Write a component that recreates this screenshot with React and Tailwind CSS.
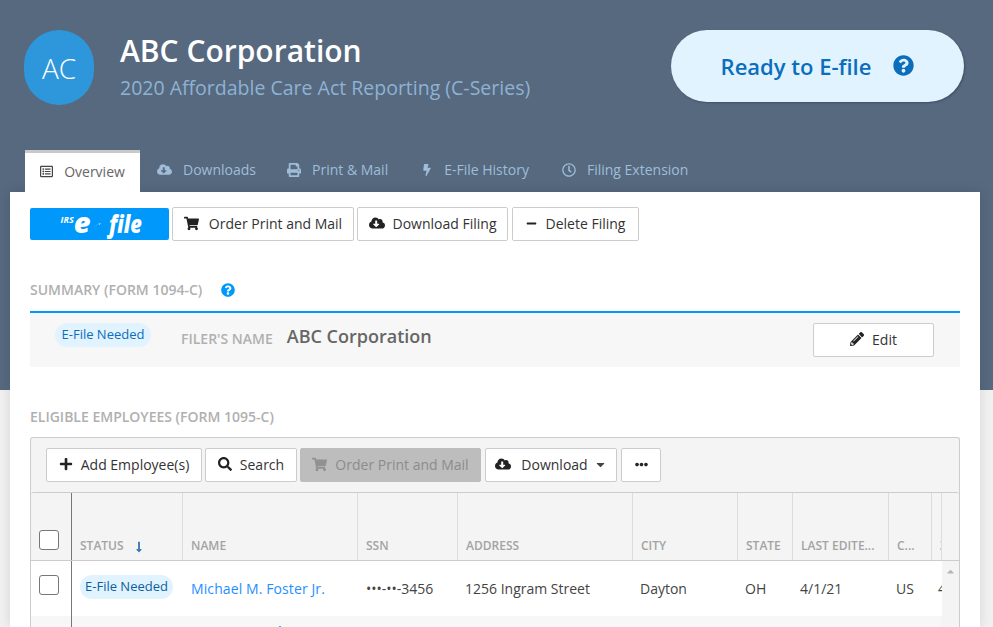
import React from "react";
import {
  FaRegListAlt, FaCloudDownloadAlt, FaPrint, FaBolt, FaRegClock, FaQuestionCircle,
  FaShoppingCart, FaMinus, FaPencilAlt, FaPlus, FaSearch, FaCaretDown, FaEllipsisH,
  FaLongArrowAltDown, FaCaretUp,
} from "react-icons/fa";

function Btn({ icon, children, className = "" }) {
  return (
    <button className={"h-[34px] pb-[2px] flex items-center justify-center gap-[8px] bg-white border border-[#cccccc] rounded-[2px] text-[14px] text-[#333333] whitespace-nowrap " + className}>
      {icon}
      {children}
    </button>
  );
}

function Tab({ icon, label, className = "" }) {
  return (
    <div className={"flex items-center gap-[11px] text-[14px] text-[#9fbdd9] pb-[3px] " + className}>
      {icon}
      <span>{label}</span>
    </div>
  );
}

function Th({ w, children, className = "" }) {
  return (
    <div className={"shrink-0 h-full flex items-end pb-[5px] pl-[8px] border-r border-[#dddddd] text-[12px] font-semibold text-[#a3a3a3] whitespace-nowrap overflow-hidden " + w + " " + className}>
      {children}
    </div>
  );
}

function Td({ w, children, className = "" }) {
  return (
    <div className={"shrink-0 pl-[7px] pb-[1px] text-[14px] text-[#444444] whitespace-nowrap overflow-hidden " + w + " " + className}>
      {children}
    </div>
  );
}

export default function App() {
  return (
    <div className="relative h-[627px] w-[993px] overflow-hidden bg-[linear-gradient(#56697f_390px,#f1f1f1_390px)] font-['Open_Sans',sans-serif]">
      <header className="flex h-[150px] items-start pl-[24px] pr-[29px] pt-[30px]">
        <div className="flex h-[75px] w-[70px] shrink-0 items-center justify-center rounded-full bg-[#2e97dc] text-[28px] font-light text-white">AC</div>
        <div className="ml-[26px] flex-1">
          <h1 className="text-[30px] font-semibold leading-[40px] mt-[1px] text-white">ABC Corporation</h1>
          <p className="text-[19.5px] leading-[30px] text-[#8fb2d4] mt-[2px]">2020 Affordable Care Act Reporting (C-Series)</p>
        </div>
        <div className="flex h-[72px] w-[293px] items-center justify-center gap-[22px] rounded-full bg-[#e1f3ff] text-[22px] font-semibold text-[#0a6ebd] shadow-[1px_1px_2px_rgba(0,0,0,0.25)]">
          <span className="mt-[1px]">Ready to E-file</span>
          <FaQuestionCircle className="text-[#0a6ebd] text-[21px] -mt-[2px]" />
        </div>
      </header>

      <nav className="flex h-[42px] items-center pl-[25px]">
        <div className="flex h-[42px] w-[115px] items-center justify-center gap-[11px] border-t-[3px] border-[#c9c9c9] bg-white pb-[2px] text-[14px] text-[#666666]">
          <FaRegListAlt className="text-[13px] text-[#444444]" />
          <span>Overview</span>
        </div>
        <Tab className="ml-[17px] gap-[10px]" icon={<FaCloudDownloadAlt className="text-[15px]" />} label="Downloads" />
        <Tab className="ml-[31px]" icon={<FaPrint className="text-[14px]" />} label="Print & Mail" />
        <Tab className="ml-[33px]" icon={<FaBolt className="text-[12px]" />} label="E-File History" />
        <Tab className="ml-[33px]" icon={<FaRegClock className="text-[14px]" />} label="Filing Extension" />
      </nav>

      <main className="mx-[10px] h-[435px] w-[970px] bg-white px-[20px] pt-[15px] shadow-[0_0_12px_rgba(0,0,0,0.12)]">
        <div className="flex items-center gap-[3px]">
          <div className="flex h-[32px] w-[139px] items-center justify-center rounded-[2px] bg-[#0098fb] pl-[3px] text-white italic font-extrabold">
            <span className="text-[9px] -mt-[8px] font-bold">IRS</span>
            <span className="text-[29px] leading-none -mt-[6px] origin-center">e</span>
            <svg width="13" height="8" viewBox="0 0 13 8" className="mx-[3px] opacity-80">
              <polygon points="0,7 6,3.5 6,5 13,0 7.5,4 7.5,3 " fill="white" />
            </svg>
            <span className="text-[25px] leading-none -mt-[2px] w-[32px] origin-left scale-x-[0.8]">file</span>
          </div>
          <Btn className="w-[182px] gap-[10px]" icon={<FaShoppingCart className="text-[15px] text-[#222222]" />}>Order Print and Mail</Btn>
          <Btn className="w-[151px]" icon={<FaCloudDownloadAlt className="text-[16px] text-[#222222]" />}>Download Filing</Btn>
          <Btn className="ml-[1px] w-[127px] gap-[9px]" icon={<FaMinus className="text-[11px] text-[#222222]" />}>Delete Filing</Btn>
        </div>

        <div className="mt-[33px] flex h-[39px] items-center border-b-2 border-[#0098fb] pb-[5px]">
          <span className="text-[14px] font-semibold text-[#b0b0b0] -mt-[1px]">SUMMARY (FORM 1094-C)</span>
          <FaQuestionCircle className="ml-[19px] text-[14px] text-[#0098fb] -mt-[1px]" />
        </div>
        <div className="relative flex h-[54px] items-start bg-[#f7f7f7] pl-[25px] pr-[26px]">
          <span className="mt-[10px] flex h-[24px] w-[96px] items-center justify-center rounded-full bg-[#e1f3ff] text-[13px] font-medium text-[#0a6ebd]">E-File Needed</span>
          <span className="ml-[30px] mt-[15px] text-[14px] font-semibold text-[#b0b0b0]">FILER'S NAME</span>
          <span className="ml-[14px] mt-[10px] text-[18px] font-semibold text-[#666666]">ABC Corporation</span>
          <Btn className="ml-auto mt-[10px] w-[121px] gap-[8px]" icon={<FaPencilAlt className="text-[14px] text-[#222222]" />}>Edit</Btn>
        </div>

        <h2 className="mt-[41px] text-[14px] font-semibold leading-[18px] text-[#b0b0b0]">ELIGIBLE EMPLOYEES (FORM 1095-C)</h2>

        <section className="mt-[11px] rounded-t-[3px] border border-b-0 border-[#cccccc] bg-[#f4f4f4]">
          <div className="flex h-[54px] items-start gap-[3px] pl-[15px] pt-[10px]">
            <Btn className="w-[156px] gap-[8px]" icon={<FaPlus className="text-[14px] text-[#222222]" />}>Add Employee(s)</Btn>
            <Btn className="w-[92px]" icon={<FaSearch className="text-[14px] text-[#222222]" />}>Search</Btn>
            <Btn className="w-[181px] !bg-[#bdbdbd] !text-[#8c8c8c] !border-[#bdbdbd]" icon={<FaShoppingCart className="text-[15px] text-[#919191]" />}>Order Print and Mail</Btn>
            <Btn className="ml-[1px] w-[132px] gap-[10px]" icon={<FaCloudDownloadAlt className="text-[16px] text-[#222222]" />}>
              Download
              <FaCaretDown className="text-[13px] text-[#444444] -ml-[4px]" />
            </Btn>
            <Btn className="ml-[1px] w-[40px]" icon={<FaEllipsisH className="text-[13px] text-[#222222]" />} />
          </div>

          <div className="relative h-[135px] overflow-hidden rounded-t-[3px] border-t border-[#cccccc]">
            <div className="flex h-[68px] border-b border-[#cccccc] bg-[#f4f4f4]">
              <div className="flex h-full w-[41px] shrink-0 items-end justify-center border-r border-[#777777] pb-[10px]">
                <div className="mr-[5px] h-[20px] w-[20px] rounded-[3px] border border-[#777777] bg-white" />
              </div>
              <Th w="w-[111px]">
                STATUS
                <FaLongArrowAltDown className="ml-[9px] mb-[2px] text-[12px] text-[#3f79b5]" />
              </Th>
              <Th w="w-[175px]">NAME</Th>
              <Th w="w-[100px]">SSN</Th>
              <Th w="w-[175px]">ADDRESS</Th>
              <Th w="w-[105px]">CITY</Th>
              <Th w="w-[55px]">STATE</Th>
              <Th w="w-[96px]">LAST EDITE...</Th>
              <Th w="w-[43px]">C...</Th>
              <Th w="w-[10px]" className="border-[#c4c4c4]">Z</Th>
              <div className="flex-1" />
            </div>
            <div className="flex h-[55px] items-center bg-white">
              <div className="flex h-full w-[41px] shrink-0 items-center justify-center border-r border-[#777777]">
                <div className="mb-[8px] mr-[5px] h-[20px] w-[20px] rounded-[3px] border border-[#777777] bg-white" />
              </div>
              <div className="w-[111px] shrink-0 pl-[8px]">
                <span className="mb-[3px] flex h-[24px] w-[93px] items-center justify-center rounded-full bg-[#e1f3ff] text-[13px] font-medium text-[#0c5f9e]">E-File Needed</span>
              </div>
              <Td w="w-[175px]" className="!text-[#1f8fff] font-medium tracking-[0.1px] !pl-[8px]">Michael M. Foster Jr.</Td>
              <Td w="w-[100px]" className="!pl-[8px]">•••-••-3456</Td>
              <Td w="w-[175px]">1256 Ingram Street</Td>
              <Td w="w-[105px]">Dayton</Td>
              <Td w="w-[55px]">OH</Td>
              <Td w="w-[96px]">4/1/21</Td>
              <Td w="w-[43px]">US</Td>
              <Td w="w-[10px]" className="!pl-[6px]">4</Td>
              <div className="flex h-full flex-1 justify-center bg-[#f4f4f4] pt-[5px]">
                <FaCaretUp className="text-[11px] text-[#b5b5b5]" />
              </div>
            </div>
            <div className="flex h-[12px] bg-[#f7f7f7]">
              <div className="h-full w-[41px] shrink-0 border-r border-[#777777]" />
              <div className="ml-[207px] mt-[10px] h-[2px] w-[2px] bg-[#4da3ff]" />
              <div className="ml-auto h-full w-[18px] bg-[#f4f4f4]" />
            </div>
          </div>
        </section>
      </main>
    </div>
  );
}
